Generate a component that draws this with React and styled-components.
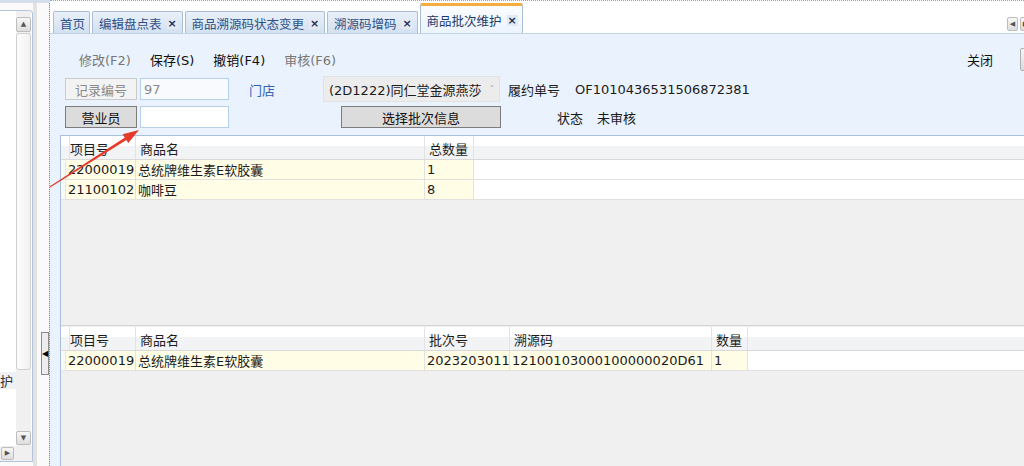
import React from 'react';
import styled, { createGlobalStyle } from 'styled-components';

const GlobalStyle = createGlobalStyle`
  html, body { margin: 0; padding: 0; }
  body {
    width: 1024px; height: 466px; overflow: hidden; background: #fff;
    font-family: "DejaVu Sans", "Noto Sans CJK SC", sans-serif;
    font-size: 13px; color: #1b1b1b;
  }
  * { box-sizing: border-box; }
`;

const Screen = styled.div`
  position: relative;
  width: 1024px;
  height: 466px;
  display: flex;
  overflow: hidden;
  background: #fff;
`;

/* ---------- left sidebar ---------- */
const Sidebar = styled.div`
  width: 50px;
  flex-shrink: 0;
  display: flex;
  border-top: 3px solid #d3deea;
  background: #fafafa;
`;

const Panel = styled.div`
  width: 33px;
  height: 452px;
  margin-top: 7px;
  border: 1px solid #b3c5d9;
  border-left: none;
  border-top-right-radius: 4px;
  background: #fff;
  display: flex;
  flex-direction: column;
  overflow: hidden;
`;

const PanelBody = styled.div`
  flex: 1;
  display: flex;
  min-height: 0;
`;

const List = styled.div`
  width: 16px;
  padding-top: 361px;
  overflow: hidden;
`;

const ListItem = styled.div`
  height: 17px;
  display: flex;
  justify-content: flex-end;
  align-items: center;
  white-space: nowrap;
  padding-right: 3px;
  background: #eef1f5;
  color: #333;
  overflow: hidden;
`;

const VScroll = styled.div`
  width: 15px;
  display: flex;
  flex-direction: column;
  padding: 6px 0 1px;
  background: #f0f0f0;
`;

const ScrollBtn = styled.div`
  width: ${p => p.$w || 15}px;
  height: ${p => p.$h || 15}px;
  flex-shrink: 0;
  border: 1px solid #bdbdbd;
  border-radius: 2px;
  background: linear-gradient(#f7f7f7, #dedede);
  display: flex;
  align-items: center;
  justify-content: center;
  font-size: 7px;
  line-height: 1;
  color: #555;
`;

const Thumb = styled.div`
  height: 337px;
  margin-top: 1px;
  flex-shrink: 0;
  border: 1px solid #cfcfcf;
  border-radius: 3px;
  background: linear-gradient(to right, #fdfdfd, #f1f1f1);
`;

const Track = styled.div`
  flex: 1;
`;

const HScroll = styled.div`
  height: 15px;
  flex-shrink: 0;
  background: #f0f0f0;
  display: flex;
  align-items: center;
  padding-left: 1px;
`;

const Gutter = styled.div`
  flex: 1;
  display: flex;
  flex-direction: column;
  border-right: 1px dotted #7b8da5;
  background: linear-gradient(to right, #e2e2e2 0, #e2e2e2 4px, #fafafa 4px);
`;

const Toggle = styled.div`
  margin: 329px 0 0 8px;
  width: 8px;
  height: 43px;
  border: 1px solid #8c8c8c;
  background: #ececec;
  display: flex;
  align-items: center;
  justify-content: center;
  font-size: 8px;
  color: #000;
`;

/* ---------- main ---------- */
const Main = styled.div`
  flex: 1;
  display: flex;
  flex-direction: column;
  background: #eaf3fd;
  min-width: 0;
  overflow: hidden;
`;

const TabBar = styled.div`
  height: 34px;
  flex-shrink: 0;
  display: flex;
  align-items: flex-end;
  gap: 2px;
  padding-left: 3px;
  background: #fff;
  border-top: 1px dotted #8aa5cc;
  border-bottom: 1px solid #c3d2e3;
  overflow: hidden;
`;

const Tab = styled.div`
  height: ${p => (p.$active ? 31 : 23)}px;
  margin-bottom: -1px;
  display: flex;
  align-items: center;
  gap: 5px;
  padding: 0 4px 0 6px;
  flex-shrink: 0;
  white-space: nowrap;
  font-size: 12.5px;
  border: 1px solid #a8bdd6;
  border-bottom: none;
  border-top: ${p => (p.$active ? '3px solid #f4ae3f' : '1px solid #a8bdd6')};
  border-radius: 2px 2px 0 0;
  background: ${p =>
    p.$active
      ? 'linear-gradient(#fbfdff, #eaf3fd)'
      : 'linear-gradient(#e9f0f9, #d2e0f0)'};
  color: ${p => (p.$active ? '#1d3a68' : '#2f5087')};
  padding-top: ${p => (p.$active ? 0 : 1)}px;
`;

const CloseBox = styled.span`
  width: 11px;
  height: 11px;
  display: flex;
  align-items: center;
  justify-content: center;
  background: #e3eaf3;
  color: #1e2d52;
  font-size: 11px;
  font-weight: bold;
  line-height: 1;
`;

const TabScroll = styled.div`
  margin-left: auto;
  margin-right: -7px;
  margin-bottom: 1px;
  display: flex;
  gap: 2px;
  align-self: flex-end;
  padding-bottom: 1px;
`;

const Form = styled.div`
  height: 101px;
  flex-shrink: 0;
  padding-top: 14px;
  display: flex;
  flex-direction: column;
`;

const Toolbar = styled.div`
  height: 22px;
  display: flex;
  align-items: center;
  gap: 19px;
  padding-left: 29px;
`;

const ToolItem = styled.span`
  color: ${p => (p.$disabled ? '#777' : '#111')};
  white-space: nowrap;
  flex-shrink: 0;
`;

const CloseItem = styled(ToolItem)`
  margin-left: auto;
`;

const EdgeButton = styled.div`
  width: 14px;
  height: 23px;
  flex-shrink: 0;
  margin-left: 8px;
  margin-right: -10px;
  border: 1px solid #b0b0b0;
  border-radius: 2px;
  background: linear-gradient(#f6f6f6, #dadada);
`;

const FieldRow = styled.div`
  height: 22px;
  margin-top: ${p => p.$mt}px;
  display: flex;
  align-items: center;
  padding-left: 15px;
  white-space: nowrap;
`;

const FieldButton = styled.div`
  width: ${p => p.$w}px;
  height: 22px;
  margin-left: ${p => p.$ml || 0}px;
  flex-shrink: 0;
  display: flex;
  align-items: center;
  justify-content: center;
  border: 1px solid ${p => (p.$disabled ? '#cacaca' : '#7c7c7c')};
  background: ${p => (p.$disabled ? '#f3f3f3' : '#dcdcdc')};
  color: ${p => (p.$disabled ? '#8a8a8a' : '#111')};
`;

const TextInput = styled.div`
  width: 89px;
  height: 22px;
  margin-left: 3px;
  flex-shrink: 0;
  padding-left: 3px;
  display: flex;
  align-items: center;
  border: 1px solid #b5d0ec;
  background: ${p => (p.$readonly ? '#f8fafd' : '#fff')};
  color: #8a8a8a;
`;

const Label = styled.span`
  width: ${p => (p.$w ? `${p.$w}px` : 'auto')};
  margin-left: ${p => p.$ml || 0}px;
  flex-shrink: 0;
  color: ${p => (p.$blue ? '#2f62b4' : '#1b1b1b')};
`;

const Select = styled.div`
  width: 177px;
  height: 26px;
  flex-shrink: 0;
  display: flex;
  align-items: center;
  justify-content: space-between;
  padding: 0 5px 0 5px;
  background: #ececec;
  border: 1px solid #e2e2e2;
  color: #1b1b1b;
`;

const Caret = styled.span`
  font-size: 8px;
  color: #9a9a9a;
`;

/* ---------- grids ---------- */
const GridArea = styled.div`
  flex: 1;
  margin-left: 10px;
  border-left: 1px solid #a6c0de;
  border-top: 1px solid #a6c0de;
  background: #f0f0f0;
  display: flex;
  flex-direction: column;
  min-height: 0;
`;

const Grid = styled.div`
  height: ${p => (p.$h ? `${p.$h}px` : 'auto')};
  flex: ${p => (p.$h ? 'none' : 1)};
  display: flex;
  flex-direction: column;
  border-top: ${p => (p.$sep ? '1px solid #d4d4d4' : 'none')};
  padding-top: ${p => (p.$sep ? 1 : 0)}px;
`;

const HeadRow = styled.div`
  display: grid;
  grid-template-columns: ${p => p.$cols};
  height: 24px;
  background: linear-gradient(#ffffff 0, #ffffff 42%, #f2f3f5 43%, #f2f3f5 100%);
  border-bottom: 1px solid #d9d9d9;
`;

const HeadCell = styled.div`
  display: flex;
  align-items: center;
  padding: 2px 4px 0;
  white-space: nowrap;
  overflow: hidden;
  border-right: ${p => (p.$last ? 'none' : '1px solid #e3e3e3')};
`;

const DataRow = styled.div`
  display: grid;
  grid-template-columns: ${p => p.$cols};
  height: 20px;
  background: #fff;
`;

const DataCell = styled.div`
  display: flex;
  align-items: center;
  padding: 0 2px;
  white-space: nowrap;
  overflow: hidden;
  background: ${p => (p.$filler ? '#fff' : '#fffde6')};
  border-right: ${p => (p.$last ? 'none' : '1px solid #e2e2e2')};
  border-bottom: 1px solid #e0e0e0;
`;

const Indicator = styled.div`
  background: #fafafa;
  border-right: 1px solid #e6e6e6;
  border-bottom: 1px solid #e6e6e6;
`;

const ArrowLayer = styled.svg`
  position: absolute;
  left: 0;
  top: 0;
  pointer-events: none;
`;

const cols1 = '5px 70px 289px 49px 1fr';
const cols2 = '5px 70px 289px 85px 202px 36px 1fr';

const rows1 = [
  ['22000019', '总统牌维生素E软胶囊', '1'],
  ['21100102', '咖啡豆', '8'],
];
const rows2 = [['22000019', '总统牌维生素E软胶囊', '2023203011', '12100103000100000020D61', '1']];

function DataGrid({ cols, heads, rows, h, sep }) {
  return (
    <Grid $h={h} $sep={sep}>
      <HeadRow $cols={cols}>
        <HeadCell />
        {heads.map(t => (
          <HeadCell key={t}>{t}</HeadCell>
        ))}
        <HeadCell $last />
      </HeadRow>
      {rows.map((r, i) => (
        <DataRow key={i} $cols={cols}>
          <Indicator />
          {r.map((c, j) => (
            <DataCell key={j}>{c}</DataCell>
          ))}
          <DataCell $filler $last />
        </DataRow>
      ))}
    </Grid>
  );
}

export default function App() {
  const tabs = [
    { t: '首页', close: false },
    { t: '编辑盘点表', close: true },
    { t: '商品溯源码状态变更', close: true },
    { t: '溯源码增码', close: true },
    { t: '商品批次维护', close: true, active: true },
  ];
  return (
    <Screen>
      <GlobalStyle />
      <Sidebar>
        <Panel>
          <PanelBody>
            <List>
              <ListItem>商品批次维护</ListItem>
            </List>
            <VScroll>
              <ScrollBtn>▲</ScrollBtn>
              <Thumb />
              <Track />
              <ScrollBtn $h={14}>▼</ScrollBtn>
            </VScroll>
          </PanelBody>
          <HScroll>
            <ScrollBtn $w={13} $h={13}>▶</ScrollBtn>
          </HScroll>
        </Panel>
        <Gutter>
          <Toggle>◀</Toggle>
        </Gutter>
      </Sidebar>

      <Main>
        <TabBar>
          {tabs.map(tb => (
            <Tab key={tb.t} $active={tb.active}>
              {tb.t}
              {tb.close && <CloseBox>×</CloseBox>}
            </Tab>
          ))}
          <TabScroll>
            <ScrollBtn $w={11} $h={14}>◀</ScrollBtn>
            <ScrollBtn $w={11} $h={14}>▶</ScrollBtn>
          </TabScroll>
        </TabBar>

        <Form>
          <Toolbar>
            <ToolItem $disabled>修改(F2)</ToolItem>
            <ToolItem>保存(S)</ToolItem>
            <ToolItem>撤销(F4)</ToolItem>
            <ToolItem $disabled>审核(F6)</ToolItem>
            <CloseItem>关闭</CloseItem>
            <EdgeButton />
          </Toolbar>
          <FieldRow $mt={8}>
            <FieldButton $w={72} $disabled>记录编号</FieldButton>
            <TextInput $readonly>97</TextInput>
            <Label $blue $ml={20} $w={74}>门店</Label>
            <Select>
              <span>(2D1222)同仁堂金源燕莎</span>
              <Caret>˅</Caret>
            </Select>
            <Label $ml={8} $w={67}>履约单号</Label>
            <Label>OF1010436531506872381</Label>
          </FieldRow>
          <FieldRow $mt={6}>
            <FieldButton $w={72}>营业员</FieldButton>
            <TextInput />
            <FieldButton $w={160} $ml={112}>选择批次信息</FieldButton>
            <Label $ml={56} $w={40}>状态</Label>
            <Label>未审核</Label>
          </FieldRow>
        </Form>

        <GridArea>
          <DataGrid cols={cols1} heads={['项目号', '商品名', '总数量']} rows={rows1} h={189} />
          <DataGrid
            cols={cols2}
            heads={['项目号', '商品名', '批次号', '溯源码', '数量']}
            rows={rows2}
            sep
          />
        </GridArea>
      </Main>

      <ArrowLayer width="1024" height="466" viewBox="0 0 1024 466">
        <polygon points="49.6,186.6 125.3,137.3 126.8,139.7 50.1,187.4" fill="#e5392c" />
        <polygon points="139,130 122.6,134.3 128.3,143" fill="#e5392c" />
      </ArrowLayer>
    </Screen>
  );
}
